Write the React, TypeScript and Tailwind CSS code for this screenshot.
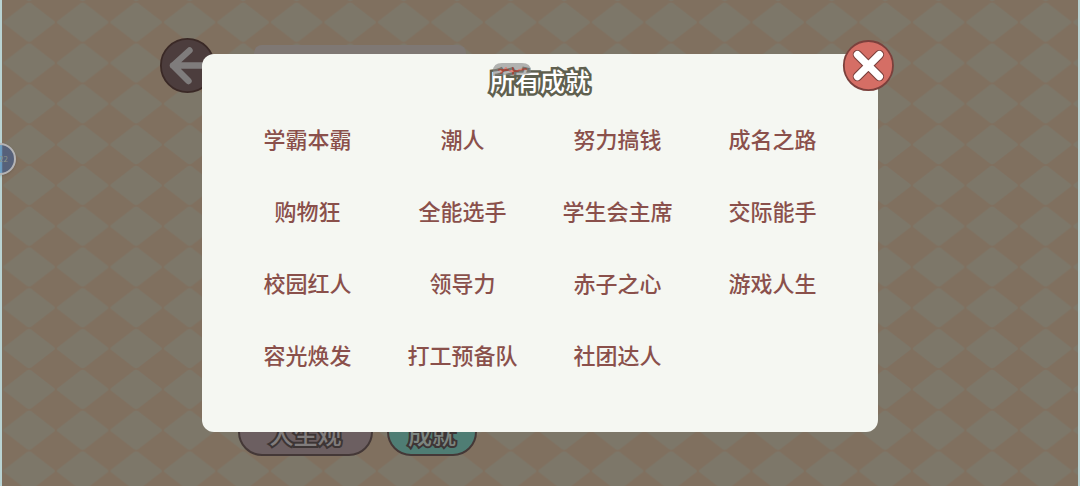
const achievements = [
  "学霸本霸",
  "潮人",
  "努力搞钱",
  "成名之路",
  "购物狂",
  "全能选手",
  "学生会主席",
  "交际能手",
  "校园红人",
  "领导力",
  "赤子之心",
  "游戏人生",
  "容光焕发",
  "打工预备队",
  "社团达人",
];

const Diamonds = () => (
  <svg className="absolute inset-0 w-full h-full" aria-hidden="true">
    <defs>
      <pattern
        id="diamonds"
        x="2.4"
        y="1.8"
        width="53.5"
        height="40.8"
        patternUnits="userSpaceOnUse"
      >
        <rect width="53.5" height="40.8" fill="#80705f" />
        <path
          d="M24.5 1.6Q26.75 0 29 1.6L51.5 18.8Q53.5 20.4 51.5 22L29 39.2Q26.75 40.8 24.5 39.2L2 22Q0 20.4 2 18.8Z"
          fill="#7d7769"
        />
      </pattern>
    </defs>
    <rect width="100%" height="100%" fill="url(#diamonds)" />
  </svg>
);

const BackIcon = () => (
  <svg viewBox="0 0 56 56" className="w-14 h-14" aria-hidden="true">
    <circle cx="27.5" cy="28.5" r="26.6" fill="#4c3d3d" stroke="#3a2926" strokeWidth="1.8" />
    <path
      d="M29.5 13.5L13 28.5L28.5 44M13 28.5H50"
      fill="none"
      stroke="#7f7c7c"
      strokeWidth="6.4"
      strokeLinecap="round"
      strokeLinejoin="round"
    />
  </svg>
);

const CloseIcon = () => (
  <svg viewBox="0 0 52 52" className="w-13 h-13" aria-hidden="true">
    <circle cx="26.4" cy="25.6" r="24.6" fill="#d56e65" stroke="#7b403c" strokeWidth="1.8" />
    <g fill="none" strokeLinecap="round">
      <path d="M15.4 14.6L37.4 36.6M37.4 14.6L15.4 36.6" stroke="#7b403c" strokeWidth="9.4" />
      <path d="M15.4 14.6L37.4 36.6M37.4 14.6L15.4 36.6" stroke="#fff" strokeWidth="7.2" />
    </g>
  </svg>
);

// last frame of a toast that is fading out over the title
const Toast = () => (
  <svg
    viewBox="0 0 38 16"
    className="absolute top-2 left-[291px] w-[38px] h-4 opacity-60"
    aria-hidden="true"
  >
    <path d="M0 14V9Q0 1 9 1H29Q38 1 38 9V11Q32 13 22 13T0 14Z" fill="#858585" />
    <path
      d="M6 8H15M8 11L13 6M17 9H25M20 6V12M26 8L33 7"
      fill="none"
      stroke="#c23a32"
      strokeWidth="2"
      strokeLinecap="round"
    />
  </svg>
);

const App = () => {
  return (
    <main className="relative min-h-screen overflow-hidden bg-[#80705f] font-['Noto_Sans_CJK_SC',sans-serif]">
      <Diamonds />
      <div className="absolute inset-0 border-x-2 border-[#b9d3d3]" />

      {/* screen under the dialog */}
      <div className="absolute inset-0 flex flex-col justify-between w-full max-w-[760px] pt-[37px] pb-[30px] mx-auto">
        <div className="flex items-start gap-[38px]">
          <button type="button" aria-label="返回" className="rounded-full">
            <BackIcon />
          </button>
          <div className="w-[212px] h-8 mt-2 rounded-lg bg-[#7f7874]" />
        </div>
        <div className="flex gap-3.5 pl-[78px]">
          <button
            type="button"
            className="w-[135px] h-12 rounded-3xl border-2 border-[#443837] bg-[#6c5f61] pt-1 text-2xl leading-8 font-medium text-[#817d7d] [-webkit-text-stroke:4px_#3d3535] [paint-order:stroke]"
          >
            人生观
          </button>
          <button
            type="button"
            className="w-[90px] h-12 rounded-3xl border-2 border-[#443837] bg-[#4f7d74] pt-1 text-2xl leading-8 font-medium text-[#7c8580] [-webkit-text-stroke:4px_#3d3535] [paint-order:stroke]"
          >
            成就
          </button>
        </div>
      </div>

      {/* floating assistant ball */}
      <div className="absolute top-[143px] -left-4 flex items-center justify-end w-8 h-8 pr-1.5 rounded-full border-2 border-[#b4b4b6] bg-linear-to-r from-[#6b9fc4] from-55% to-[#56617a] to-60% text-[8px] text-[#8b9488] shadow-sm">
        22
      </div>

      <section
        role="dialog"
        aria-labelledby="title"
        className="relative w-full max-w-[676px] mx-auto mt-[54px] px-7 pt-2 pb-[42px] rounded-xl bg-[#f5f7f2]"
      >
        <h1
          id="title"
          className="mb-1 text-center text-[25px] leading-9 font-medium text-white [-webkit-text-stroke:5px_#5f604f] [paint-order:stroke]"
        >
          所有成就
        </h1>
        <Toast />
        <ul className="grid grid-cols-4 text-center text-[22px] font-medium text-[#8a504b]">
          {achievements.map((name) => (
            <li key={name} className="flex items-center justify-center h-18">
              {name}
            </li>
          ))}
        </ul>
        <button
          type="button"
          aria-label="关闭"
          className="absolute -top-3.5 -right-4 rounded-full"
        >
          <CloseIcon />
        </button>
      </section>
    </main>
  );
};

export default App;
